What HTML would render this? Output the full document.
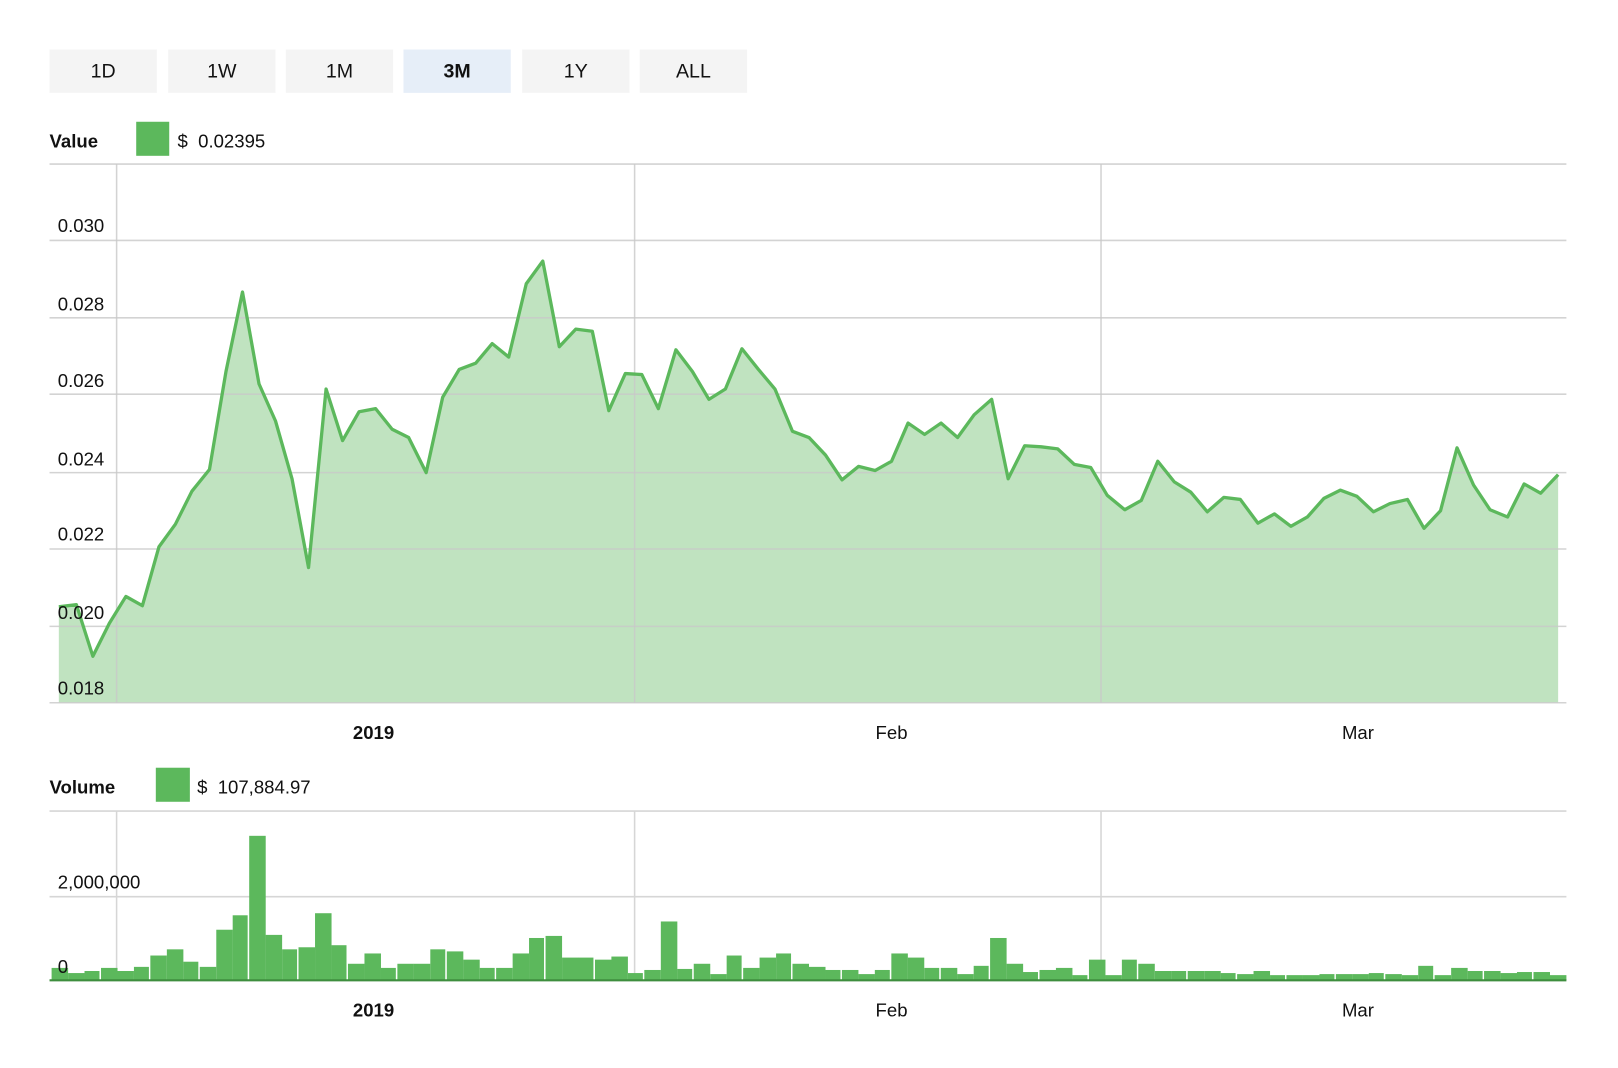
<!DOCTYPE html>
<html><head><meta charset="utf-8"><style>
html,body{margin:0;padding:0;background:#fff;width:1618px;height:1068px;overflow:hidden}
svg{display:block}
text{font-family:"Liberation Sans",sans-serif;fill:#111}
</style></head><body>
<svg width="1618" height="1068" viewBox="0 0 1568 1035" preserveAspectRatio="none" xmlns="http://www.w3.org/2000/svg">
<g font-size="19" text-anchor="middle">
<rect x="48" y="48" width="104" height="42" fill="#f4f4f4"/><text x="100" y="75">1D</text>
<rect x="163" y="48" width="104" height="42" fill="#f4f4f4"/><text x="215" y="75">1W</text>
<rect x="277" y="48" width="104" height="42" fill="#f4f4f4"/><text x="329" y="75">1M</text>
<rect x="391" y="48" width="104" height="42" fill="#e6eef8"/><text x="443" y="75" font-weight="bold">3M</text>
<rect x="506" y="48" width="104" height="42" fill="#f4f4f4"/><text x="558" y="75">1Y</text>
<rect x="620" y="48" width="104" height="42" fill="#f4f4f4"/><text x="672" y="75">ALL</text>
</g>
<text x="48" y="143" font-size="18" font-weight="bold">Value</text>
<rect x="132" y="118" width="32" height="33" fill="#5cb85c"/>
<text x="172" y="143" font-size="18">$ &#160;0.02395</text>
<path fill="#c0e3c0" d="M57,681 L57,588 74,586 90,636 106,604 122,578 138,587 154,530 170,508 186,476 203,455 219,360 235,283 251,372 267,408 283,464 299,550 316,377 332,427 348,399 364,396 380,416 396,424 413,458 429,385 445,358 461,352 477,333 493,346 510,275 526,253 542,336 558,319 574,321 590,398 606,362 622,363 638,396 655,339 671,360 687,387 703,377 719,338 735,358 751,377 768,418 784,424 800,441 816,465 832,452 848,456 864,447 880,410 896,421 912,410 928,424 944,402 961,387 977,464 993,432 1009,433 1025,435 1041,450 1057,453 1073,480 1090,494 1106,485 1122,447 1138,467 1154,477 1170,496 1186,482 1202,484 1219,507 1235,498 1251,510 1267,501 1283,483 1299,475 1315,481 1331,496 1347,488 1364,484 1380,512 1396,495 1412,434 1428,470 1444,494 1461,501 1477,469 1493,478 1510,460 L1510,681 Z"/>
<g stroke="#c8c8c8" stroke-opacity="0.8" stroke-width="1.5">
<line x1="48" y1="159" x2="1518" y2="159"/><line x1="48" y1="233" x2="1518" y2="233"/><line x1="48" y1="308" x2="1518" y2="308"/><line x1="48" y1="382" x2="1518" y2="382"/><line x1="48" y1="458" x2="1518" y2="458"/><line x1="48" y1="532" x2="1518" y2="532"/><line x1="48" y1="607" x2="1518" y2="607"/><line x1="48" y1="681" x2="1518" y2="681"/>
<line x1="113" y1="159" x2="113" y2="681"/><line x1="615" y1="159" x2="615" y2="681"/><line x1="1067" y1="159" x2="1067" y2="681"/>
</g>
<polyline fill="none" stroke="#5cb85c" stroke-width="3.2" stroke-linejoin="round" points="57,588 74,586 90,636 106,604 122,578 138,587 154,530 170,508 186,476 203,455 219,360 235,283 251,372 267,408 283,464 299,550 316,377 332,427 348,399 364,396 380,416 396,424 413,458 429,385 445,358 461,352 477,333 493,346 510,275 526,253 542,336 558,319 574,321 590,398 606,362 622,363 638,396 655,339 671,360 687,387 703,377 719,338 735,358 751,377 768,418 784,424 800,441 816,465 832,452 848,456 864,447 880,410 896,421 912,410 928,424 944,402 961,387 977,464 993,432 1009,433 1025,435 1041,450 1057,453 1073,480 1090,494 1106,485 1122,447 1138,467 1154,477 1170,496 1186,482 1202,484 1219,507 1235,498 1251,510 1267,501 1283,483 1299,475 1315,481 1331,496 1347,488 1364,484 1380,512 1396,495 1412,434 1428,470 1444,494 1461,501 1477,469 1493,478 1510,460"/>
<g font-size="18">
<text x="56" y="225">0.030</text><text x="56" y="301">0.028</text><text x="56" y="375">0.026</text><text x="56" y="451">0.024</text><text x="56" y="524">0.022</text><text x="56" y="600">0.020</text><text x="56" y="673">0.018</text>
</g>
<g font-size="18" text-anchor="middle">
<text x="362" y="716" font-weight="bold">2019</text><text x="864" y="716">Feb</text><text x="1316" y="716">Mar</text>
</g>
<text x="48" y="769" font-size="18" font-weight="bold">Volume</text>
<rect x="151" y="744" width="33" height="33" fill="#5cb85c"/>
<text x="191" y="769" font-size="18">$ &#160;107,884.97</text>
<g stroke="#d6d6d6" stroke-width="1.5">
<line x1="48" y1="786" x2="1518" y2="786"/><line x1="48" y1="869" x2="1518" y2="869"/>
<line x1="113" y1="786" x2="113" y2="950"/><line x1="615" y1="786" x2="615" y2="950"/><line x1="1067" y1="786" x2="1067" y2="950"/>
</g>
<g fill="#5cb85c" id="bars"></g>
<line x1="48" y1="950" x2="1518" y2="950" stroke="#3e8e3e" stroke-width="2"/>
<g font-size="18">
<text x="56" y="861">2,000,000</text><text x="56" y="943">0</text>
</g>
<g font-size="18" text-anchor="middle">
<text x="362" y="985" font-weight="bold">2019</text><text x="864" y="985">Feb</text><text x="1316" y="985">Mar</text>
</g>
</svg>
<script>
var t=[938,943,941,938,941,937,926,920,932,937,901,887,810,906,920,918,885,916,934,924,938,934,934,920,922,930,938,938,924,909,907,928,928,930,927,943,940,893,939,934,944,926,938,928,924,934,937,940,940,944,940,924,928,938,938,944,936,909,934,942,940,938,945,930,945,930,934,941,941,941,941,943,944,941,945,945,945,944,944,944,943,944,945,936,945,938,941,941,943,942,942,945];
var g=document.getElementById('bars'),n=t.length,w=(1518-50)/n,s='';
for(var i=0;i<n;i++){var x=50+i*w;s+='<rect x="'+x.toFixed(1)+'" y="'+t[i]+'" width="'+(w-(i%3==2?1.5:0)).toFixed(1)+'" height="'+(950-t[i])+'"/>';}
g.innerHTML=s;
</script>
</body></html>
